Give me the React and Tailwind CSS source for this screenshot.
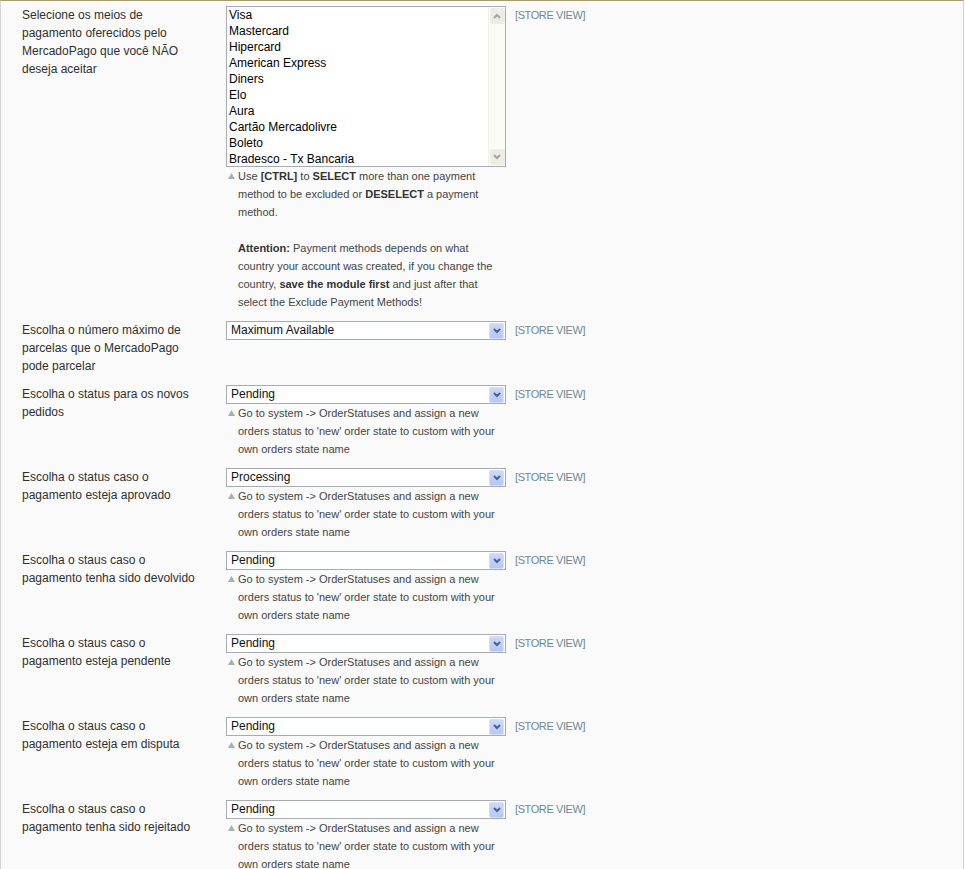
import React from "react";

const FONT = { fontFamily: '"Liberation Sans", Arial, sans-serif' };

function Tri() {
  return (
    <div className="w-[12px] shrink-0">
      <svg width="7" height="6" viewBox="0 0 7 6" className="ml-[2px] mt-[6px] block">
        <polygon points="3.5,0 7,6 0,6" fill="#a3b1b3" />
      </svg>
    </div>
  );
}

function Note({ children }) {
  return (
    <div className="flex w-[280px] text-[11px] leading-[18px] text-[#444]">
      <Tri />
      <div className="flex-1 pr-[6px]">{children}</div>
    </div>
  );
}

function StatusNote() {
  return (
    <Note>
      Go to system -&gt; OrderStatuses and assign a new orders status to 'new' order state to custom with your own orders state name
    </Note>
  );
}

function Select({ value }) {
  return (
    <div className="flex h-[19px] w-[280px] items-center border border-[#a5acb2] bg-white">
      <div className="flex-1 pl-[4px] text-[12px] leading-[17px] text-[#111]">{value}</div>
      <div className="mr-[1px] flex h-[16px] w-[15px] items-center justify-center rounded-[2px] border border-[#d3dffb] bg-gradient-to-b from-[#cbd9fd] to-[#b4c7f4]">
        <svg width="8" height="6" viewBox="0 0 8 6">
          <polyline points="1,1 4,4 7,1" fill="none" stroke="#4d6185" strokeWidth="2" />
        </svg>
      </div>
    </div>
  );
}

function ScrollBtn({ up }) {
  return (
    <div className="mx-auto flex h-[16px] w-[15px] items-center justify-center rounded-[2px] border border-[#eeeee8] bg-[#ecebe4]">
      <svg width="8" height="6" viewBox="0 0 8 6">
        <polyline
          points={up ? "1,5 4,2 7,5" : "1,1 4,4 7,1"}
          fill="none"
          stroke="#a7a7a0"
          strokeWidth="2"
        />
      </svg>
    </div>
  );
}

function ListBox() {
  const items = [
    "Visa",
    "Mastercard",
    "Hipercard",
    "American Express",
    "Diners",
    "Elo",
    "Aura",
    "Cartão Mercadolivre",
    "Boleto",
    "Bradesco - Tx Bancaria",
  ];
  return (
    <div className="flex h-[161px] w-[280px] overflow-hidden border border-[#a5acb2] bg-white">
      <div className="flex-1 pl-[2px] text-[12px] leading-[16px] text-black">
        {items.map((it) => (
          <div key={it}>{it}</div>
        ))}
      </div>
      <div className="flex w-[17px] flex-col justify-between border-l border-[#f0f0ea] bg-[#fbfbf6] py-[1px]">
        <ScrollBtn up />
        <ScrollBtn />
      </div>
    </div>
  );
}

function Row({ label, children }) {
  return (
    <div className="flex py-[5px] pl-[21px]">
      <div className="mr-[26px] w-[178px] text-[12px] leading-[18px] text-[#2f2f2f]">{label}</div>
      <div className="w-[280px]">{children}</div>
      <div className="ml-[9px] text-[11px] leading-[18px] tracking-[-0.4px] text-[#6f8992]">[STORE VIEW]</div>
    </div>
  );
}

export default function App() {
  const statusRows = [
    ["Escolha o status para os novos pedidos", "Pending"],
    ["Escolha o status caso o pagamento esteja aprovado", "Processing"],
    ["Escolha o staus caso o pagamento tenha sido devolvido", "Pending"],
    ["Escolha o staus caso o pagamento esteja pendente", "Pending"],
    ["Escolha o staus caso o pagamento esteja em disputa", "Pending"],
    ["Escolha o staus caso o pagamento tenha sido rejeitado", "Pending"],
  ];
  return (
    <div className="h-[869px] w-[965px] overflow-hidden bg-[#fafafa]" style={FONT}>
      <div className="min-h-[869px] w-[964px] border-l border-r border-t border-l-[#d3d3d3] border-r-[#d3d3d3] border-t-[#a89b6c] bg-[#fafafa]">
        <Row label="Selecione os meios de pagamento oferecidos pelo MercadoPago que você NÃO deseja aceitar">
          <ListBox />
          <Note>
            Use <b className="text-[#333]">[CTRL]</b> to <b className="text-[#333]">SELECT</b> more than one payment
            method to be excluded or <b className="text-[#333]">DESELECT</b> a payment method.
            <br />
            <br />
            <b className="text-[#333]">Attention:</b> Payment methods depends on what country your account was
            created, if you change the country, <b className="text-[#333]">save the module first</b> and just after
            that select the Exclude Payment Methods!
          </Note>
        </Row>
        <Row label="Escolha o número máximo de parcelas que o MercadoPago pode parcelar">
          <Select value="Maximum Available" />
        </Row>
        {statusRows.map(([l, v]) => (
          <Row key={l} label={l}>
            <Select value={v} />
            <StatusNote />
          </Row>
        ))}
      </div>
    </div>
  );
}
